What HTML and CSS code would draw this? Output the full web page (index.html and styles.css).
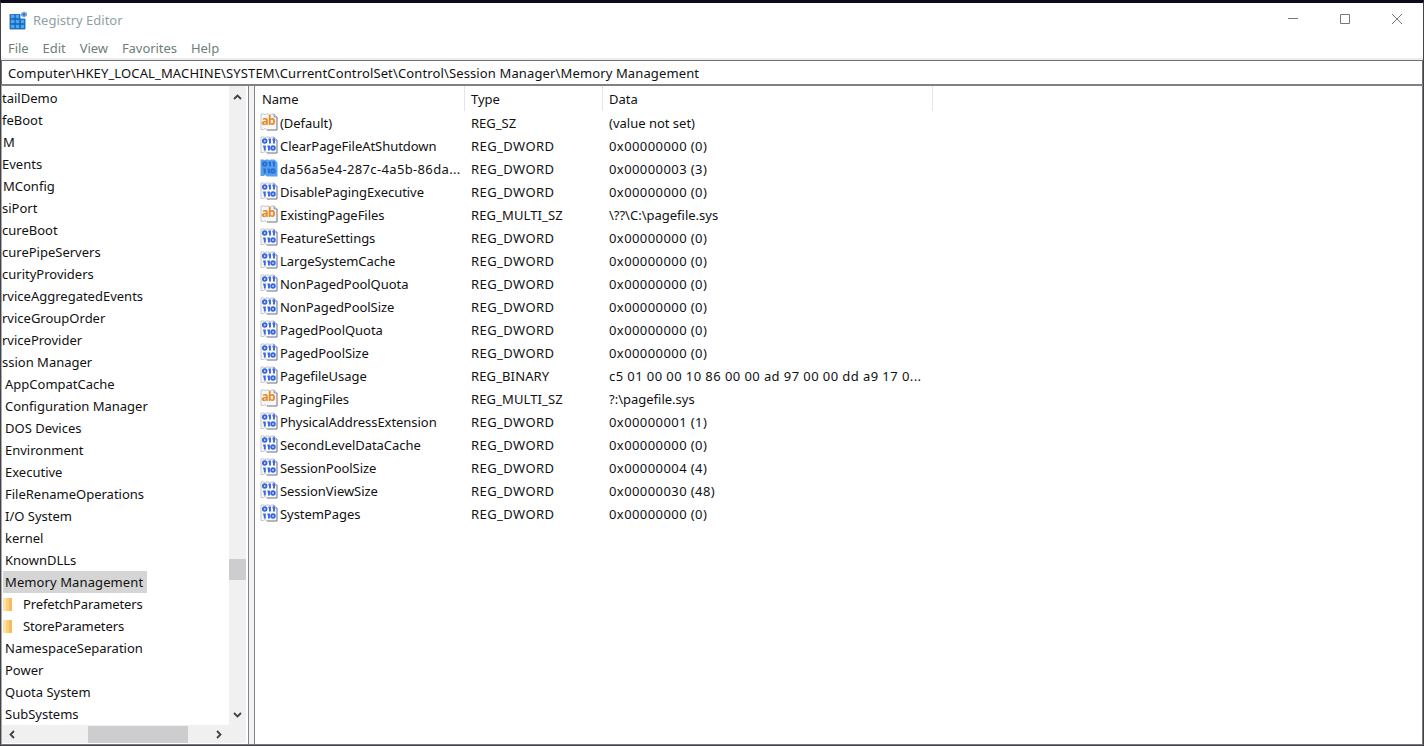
FILE: index.html
```html
<!DOCTYPE html>
<html lang="en">
<head>
    <meta charset="utf-8">
    <title>Registry Editor</title>
    <link rel="stylesheet" href="styles.css">
</head>
<body>
    <!-- shared icons -->
    <svg class="defs" width="0" height="0">
        <symbol id="icon-sz" viewBox="0 0 18 18">
            <path d="M1 1h3l1 .7 1-.7h3l1 .7 1-.7h3l3 3v13H7l-2-1.5L3.500 16.500H1z" fill="#f8f8f8" stroke="#c3c6cc"/>
            <path d="M14 1v3h3M17 4v13H7" fill="none" stroke="#858b98"/>
            <text x="1.500" y="12" class="icon-ab" textLength="14">ab</text>
        </symbol>
        <symbol id="icon-bin" viewBox="0 0 18 18">
            <path d="M1 1h3l1 .7 1-.7h3l1 .7 1-.7h3l3 3v13H7l-2-1.500L3.500 16.500H1z" fill="#f8f8f8" stroke="#c3c6cc"/>
            <path d="M14 1v3h3M17 4v13H7" fill="none" stroke="#858b98"/>
            <g fill="none" stroke="#3868e0" stroke-width="1.900">
                <circle cx="4.700" cy="5" r="1.800"/>
                <path d="M10 2.500v5M14 2.500v5M8.500 3.500h1M12.500 3.500h1"/>
                <path d="M4.800 9.500v5M9 9.500v5M3.200 10.500h1M7.500 10.500h1"/>
                <circle cx="13" cy="12" r="1.800"/>
            </g>
        </symbol>
        <symbol id="icon-bin-sel" viewBox="0 0 18 18">
            <path d="M.5.5h3l1 .7 1-.7h3l1 .7 1-.7h4l3 3v14H7l-2-1.500-1 1H.5z" fill="#5a9fec"/>
            <g fill="none" stroke="#2470d8" stroke-width="1.900">
                <circle cx="4.700" cy="5" r="1.800"/>
                <path d="M10 2.500v5M14 2.500v5M8.500 3.500h1M12.500 3.500h1"/>
                <path d="M4.800 9.500v5M9 9.500v5M3.200 10.500h1M7.500 10.500h1"/>
                <circle cx="13" cy="12" r="1.800"/>
            </g>
        </symbol>
    </svg>

    <div class="window">
        <div class="titlebar">
            <svg class="app-icon" width="19" height="19" viewBox="0 0 19 19">
                <path d="M1 3h10v5h5v10H1z" fill="#2b87dc"/>
                <path d="M2 4h4v3H2zM7 4h3v3H7zM2 9h4v3H2zM7 9h3v3H7zM2 14h4v3H2zM7 14h3v3H7zM12 14h3v3h-3zM12 9h3v3h-3z" fill="#4ba6f4"/>
                <path d="M1 3v15h15V8M6 3v15M11 3v15M1 8h15M1 13h15" fill="none" stroke="#14569f" stroke-width=".8"/>
                <path d="M15 .5l3 1.500v3l-3 1.500L12 5V2z" fill="#79a8de"/>
                <circle cx="15" cy="3.500" r="1.200" fill="#3b68a8"/>
            </svg>
            <span class="title">Registry Editor</span>
            <div class="controls">
                <svg width="12" height="12" viewBox="0 0 12 12"><path d="M1 5.500h10"/></svg>
                <svg width="12" height="12" viewBox="0 0 12 12"><path d="M1.500 1.500h9v9h-9z"/></svg>
                <svg width="12" height="12" viewBox="0 0 12 12"><path d="M1 1l10 10M11 1L1 11"/></svg>
            </div>
        </div>
        <div class="menubar">
            <span>File</span>
            <span>Edit</span>
            <span>View</span>
            <span>Favorites</span>
            <span>Help</span>
        </div>
        <div class="address">Computer\HKEY_LOCAL_MACHINE\SYSTEM\CurrentControlSet\Control\Session Manager\Memory Management</div>

        <div class="panes">
            <div class="tree-pane">
                <div class="tree-main">
                    <ul class="tree">
                        <li class="cut">tailDemo</li>
                        <li class="cut">feBoot</li>
                        <li class="cut letter">M</li>
                        <li class="cut">Events</li>
                        <li class="cut letter">MConfig</li>
                        <li class="cut">siPort</li>
                        <li class="cut">cureBoot</li>
                        <li class="cut">curePipeServers</li>
                        <li class="cut">curityProviders</li>
                        <li class="cut">rviceAggregatedEvents</li>
                        <li class="cut">rviceGroupOrder</li>
                        <li class="cut">rviceProvider</li>
                        <li class="cut">ssion Manager</li>
                        <li>AppCompatCache</li>
                        <li>Configuration Manager</li>
                        <li>DOS Devices</li>
                        <li>Environment</li>
                        <li>Executive</li>
                        <li>FileRenameOperations</li>
                        <li>I/O System</li>
                        <li>kernel</li>
                        <li>KnownDLLs</li>
                        <li class="selected"><span>Memory Management</span></li>
                        <li class="folder"><i></i>PrefetchParameters</li>
                        <li class="folder"><i></i>StoreParameters</li>
                        <li>NamespaceSeparation</li>
                        <li>Power</li>
                        <li>Quota System</li>
                        <li>SubSystems</li>
                    </ul>
                    <div class="vscroll">
                        <svg width="9" height="6" viewBox="0 0 9 6"><path d="M1 5l3.500-3.500L8 5"/></svg>
                        <div class="vthumb"></div>
                        <svg width="9" height="6" viewBox="0 0 9 6"><path d="M1 1l3.500 3.500L8 1"/></svg>
                    </div>
                </div>
                <div class="hscroll">
                    <svg width="6" height="9" viewBox="0 0 6 9"><path d="M5 1L1.500 4.500 5 8"/></svg>
                    <div class="hthumb"></div>
                    <svg width="6" height="9" viewBox="0 0 6 9"><path d="M1 1l3.500 3.500L1 8"/></svg>
                </div>
            </div>
            <div class="splitter"></div>
            <div class="list">
                <div class="row head"><span class="name">Name</span><span class="type">Type</span><span class="data">Data</span></div>
                <div class="row"><span class="name"><svg><use href="#icon-sz"/></svg>(Default)</span><span class="type">REG_SZ</span><span class="data">(value not set)</span></div>
                <div class="row"><span class="name"><svg><use href="#icon-bin"/></svg>ClearPageFileAtShutdown</span><span class="type wide">REG_DWORD</span><span class="data wide">0x00000000 (0)</span></div>
                <div class="row"><span class="name wide"><svg><use href="#icon-bin-sel"/></svg>da56a5e4-287c-4a5b-86da...</span><span class="type wide">REG_DWORD</span><span class="data wide">0x00000003 (3)</span></div>
                <div class="row"><span class="name"><svg><use href="#icon-bin"/></svg>DisablePagingExecutive</span><span class="type wide">REG_DWORD</span><span class="data wide">0x00000000 (0)</span></div>
                <div class="row"><span class="name"><svg><use href="#icon-sz"/></svg>ExistingPageFiles</span><span class="type multi">REG_MULTI_SZ</span><span class="data">\??\C:\pagefile.sys</span></div>
                <div class="row"><span class="name"><svg><use href="#icon-bin"/></svg>FeatureSettings</span><span class="type wide">REG_DWORD</span><span class="data wide">0x00000000 (0)</span></div>
                <div class="row"><span class="name"><svg><use href="#icon-bin"/></svg>LargeSystemCache</span><span class="type wide">REG_DWORD</span><span class="data wide">0x00000000 (0)</span></div>
                <div class="row"><span class="name"><svg><use href="#icon-bin"/></svg>NonPagedPoolQuota</span><span class="type wide">REG_DWORD</span><span class="data wide">0x00000000 (0)</span></div>
                <div class="row"><span class="name"><svg><use href="#icon-bin"/></svg>NonPagedPoolSize</span><span class="type wide">REG_DWORD</span><span class="data wide">0x00000000 (0)</span></div>
                <div class="row"><span class="name"><svg><use href="#icon-bin"/></svg>PagedPoolQuota</span><span class="type wide">REG_DWORD</span><span class="data wide">0x00000000 (0)</span></div>
                <div class="row"><span class="name"><svg><use href="#icon-bin"/></svg>PagedPoolSize</span><span class="type wide">REG_DWORD</span><span class="data wide">0x00000000 (0)</span></div>
                <div class="row"><span class="name"><svg><use href="#icon-bin"/></svg>PagefileUsage</span><span class="type multi">REG_BINARY</span><span class="data wide">c5 01 00 00 10 86 00 00 ad 97 00 00 dd a9 17 0...</span></div>
                <div class="row"><span class="name"><svg><use href="#icon-sz"/></svg>PagingFiles</span><span class="type multi">REG_MULTI_SZ</span><span class="data">?:\pagefile.sys</span></div>
                <div class="row"><span class="name"><svg><use href="#icon-bin"/></svg>PhysicalAddressExtension</span><span class="type wide">REG_DWORD</span><span class="data wide">0x00000001 (1)</span></div>
                <div class="row"><span class="name"><svg><use href="#icon-bin"/></svg>SecondLevelDataCache</span><span class="type wide">REG_DWORD</span><span class="data wide">0x00000000 (0)</span></div>
                <div class="row"><span class="name"><svg><use href="#icon-bin"/></svg>SessionPoolSize</span><span class="type wide">REG_DWORD</span><span class="data wide">0x00000004 (4)</span></div>
                <div class="row"><span class="name"><svg><use href="#icon-bin"/></svg>SessionViewSize</span><span class="type wide">REG_DWORD</span><span class="data wide">0x00000030 (48)</span></div>
                <div class="row"><span class="name"><svg><use href="#icon-bin"/></svg>SystemPages</span><span class="type wide">REG_DWORD</span><span class="data wide">0x00000000 (0)</span></div>
            </div>
        </div>
    </div>
</body>
</html>
```

FILE: styles.css
```css
body {
    margin: 0;
    background-color: #0d0b1b;
    font-family: "Noto Sans", "Open Sans", sans-serif;
    font-size: 13px;
    color: #111;
    overflow: hidden;
}

.defs {
    display: block;
}

.window {
    box-sizing: border-box;
    height: 746px;
    display: flex;
    flex-direction: column;
    border-top: 3px solid #0d0b1b;
    border-left: 1px solid #44434c;
    border-right: 1px solid #44434c;
    border-bottom: 1px solid #44434c;
    background-color: #fff;
    white-space: nowrap;
}

.titlebar {
    display: flex;
    height: 34px;
    align-items: center;
    padding-left: 8px;
    color: #8fa0a2;
}

.app-icon {
    margin-right: 5px;
}

.title {
    flex: 1;
}

.controls {
    display: flex;
    gap: 40px;
    padding-right: 20px;
    margin-top: -2px;
}

.controls path {
    fill: none;
    stroke: #777;
}

.menubar {
    display: flex;
    height: 21px;
    line-height: 22px;
    padding-left: 7px;
    gap: 14px;
    color: #6d8078;
    letter-spacing: -0.05px;
    border-bottom: 2px solid #ededed;
}

.address {
    height: 23px;
    line-height: 24px;
    padding-left: 6px;
    letter-spacing: 0.13px;
    border: 1px solid #707070;
    border-bottom-color: #828082;
}

.panes {
    flex: 1;
    min-height: 0;
    display: flex;
    border-top: 1px solid #828082;
    border-bottom: 1px solid #77767c;
    border-left: 1px solid #aaa;
    border-right: 1px solid #77767c;
}

.tree-pane {
    width: 244px;
    display: flex;
    flex-direction: column;
    overflow: hidden;
    padding: 0 2px 1px 0;
}

.tree-main {
    display: flex;
    flex: 1;
    min-height: 0;
}

.tree {
    flex: 1;
    margin: 0;
    padding: 1px 0 0;
    list-style: none;
    overflow: hidden;
}

.tree li {
    height: 22px;
    line-height: 22px;
    padding-left: 3px;
}

.tree .cut {
    padding-left: 0;
}

.tree .letter {
    padding-left: 1px;
}

.tree .selected {
    padding-left: 1px;
}

.selected span {
    display: inline-block;
    height: 22px;
    padding: 0 4px 0 2px;
    letter-spacing: 0.1px;
    background-color: #d5d5d5;
}

.tree .folder {
    display: flex;
    align-items: center;
    padding-left: 1px;
    letter-spacing: -0.12px;
}

.folder i {
    width: 9px;
    height: 13px;
    margin-right: 11px;
    background: linear-gradient(90deg, #ffe3a3 0 3px, #ffd07a 3px 6px, #f3bd63 6px);
}

.vscroll {
    width: 17px;
    display: flex;
    flex-direction: column;
    align-items: center;
    background-color: #f0f0f0;
    padding: 8px 0 7px;
    box-sizing: border-box;
}

.vscroll path,
.hscroll path {
    fill: none;
    stroke: #404040;
    stroke-width: 1.8;
}

.vthumb {
    width: 17px;
    height: 21px;
    margin: 459px 0 auto;
    background-color: #cdcdcf;
}

.hscroll {
    display: flex;
    align-items: center;
    height: 18px;
    padding: 0 24px 0 7px;
    background-color: #f0f0f0;
}

.hthumb {
    width: 100px;
    height: 17px;
    margin: 0 auto 0 73px;
    background-color: #cdcdcf;
}

.splitter {
    width: 5px;
    background-color: #f3f3f5;
    border-left: 1px solid #828287;
    border-right: 1px solid #828287;
}

.list {
    flex: 1;
}

.row {
    display: flex;
    height: 23px;
    line-height: 23px;
}

.row svg {
    width: 18px;
    height: 18px;
    margin: 1px 2px 0 5px;
    vertical-align: top;
}

.row span {
    box-sizing: border-box;
}

.name {
    width: 210px;
    letter-spacing: -0.05px;
}

.type {
    width: 138px;
    padding-left: 6px;
}

.data {
    width: 330px;
    padding-left: 6px;
}

.wide {
    letter-spacing: 0.42px;
}

.name.wide {
    letter-spacing: 0.35px;
}

.multi {
    letter-spacing: 0.12px;
}

.head {
    height: 26px;
    line-height: 26px;
}

.head span {
    height: 25px;
    border-right: 1px solid #e5e5e5;
}

.head .name {
    padding-left: 7px;
}

.icon-ab {
    font: bold 12px "Noto Sans", sans-serif;
    fill: #e58a27;
}
```
